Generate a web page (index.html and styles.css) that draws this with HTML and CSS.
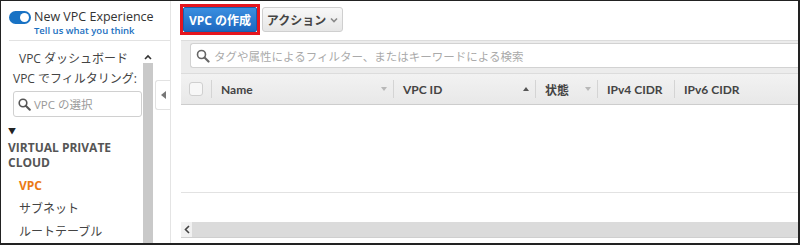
FILE: index.html
```html
<!DOCTYPE html>
<html lang="ja">

<head>
    <meta charset="UTF-8">
    <title>VPC</title>
    <link rel="stylesheet" href="styles.css">
</head>

<body>
    <div class="frame">
        <!-- ナビゲーション -->
        <aside class="nav">
            <div class="nav-head">
                <span class="toggle"><span class="knob"></span></span>
                <div class="head-text">
                    <div class="head-title">New VPC Experience</div>
                    <div class="head-link">Tell us what you think</div>
                </div>
            </div>
            <div class="nav-body">
                <div class="nav-list">
                    <div class="nav-item dash">VPC ダッシュボード</div>
                    <div class="filter-label">VPC でフィルタリング:</div>
                    <div class="nav-search">
                        <svg width="13" height="13" viewBox="0 0 13 13">
                            <circle cx="5" cy="5" r="3.8" fill="none" stroke="#555" stroke-width="1.6"/>
                            <path d="M7.8 7.8 L11.8 11.8" stroke="#555" stroke-width="2" stroke-linecap="round"/>
                        </svg>
                        <span>VPC の選択</span>
                    </div>
                    <div class="caret">&#9660;</div>
                    <div class="section">VIRTUAL PRIVATE CLOUD</div>
                    <div class="nav-item active">VPC</div>
                    <div class="nav-item">サブネット</div>
                    <div class="nav-item">ルートテーブル</div>
                </div>
                <div class="nav-scroll">
                    <div class="scroll-up">
                        <svg width="8" height="6" viewBox="0 0 8 6"><path d="M1 5 L4 2 L7 5" fill="none" stroke="#333" stroke-width="1.6"/></svg>
                    </div>
                    <div class="scroll-track"></div>
                </div>
                <div class="collapse-col">
                    <div class="collapse-tab"><span class="tri-left"></span></div>
                </div>
            </div>
        </aside>

        <!-- メイン -->
        <main class="main">
            <div class="toolbar">
                <div class="highlight"><button class="btn-primary">VPC の作成</button></div>
                <button class="btn-action">アクション <span class="chev">
                    <svg width="8" height="6" viewBox="0 0 8 6"><path d="M1 1.5 L4 4.5 L7 1.5" fill="none" stroke="#888" stroke-width="1.6"/></svg>
                </span></button>
            </div>

            <div class="panel">
                <div class="panel-top">
                    <div class="search">
                        <svg width="14" height="14" viewBox="0 0 14 14">
                            <circle cx="5.5" cy="5.5" r="4" fill="none" stroke="#666" stroke-width="1.6"/>
                            <path d="M8.5 8.5 L12.5 12.5" stroke="#666" stroke-width="2.2" stroke-linecap="round"/>
                        </svg>
                        <span>タグや属性によるフィルター、またはキーワードによる検索</span>
                    </div>
                    <div class="thead">
                        <div class="th th-check"><span class="checkbox"></span></div>
                        <div class="th col-name"><span class="sep"></span><span class="label">Name</span><span class="sort"></span></div>
                        <div class="th col-id"><span class="sep"></span><span class="label">VPC ID</span><span class="sort up"></span></div>
                        <div class="th col-state"><span class="sep"></span><span class="label">状態</span><span class="sort"></span></div>
                        <div class="th col-v4"><span class="sep"></span><span class="label">IPv4 CIDR</span></div>
                        <div class="th col-v6"><span class="sep"></span><span class="label">IPv6 CIDR</span></div>
                    </div>
                </div>
                <div class="tbody"></div>
                <div class="hscroll">
                    <div class="hscroll-btn">
                        <svg width="6" height="9" viewBox="0 0 6 9"><path d="M5 1 L1.5 4.5 L5 8" fill="none" stroke="#444" stroke-width="1.6"/></svg>
                    </div>
                    <div class="hscroll-track"></div>
                </div>
            </div>
        </main>
    </div>
</body>

</html>
```

FILE: styles.css
```css
/* 全体 */
* {
    box-sizing: border-box;
}

body {
    margin: 0;
    padding: 0;
    background-color: #fff;
    font-family: "Open Sans", "Noto Sans CJK JP", sans-serif;
}

.frame {
    width: 800px;
    height: 245px;
    border-top: 1px solid #222;
    border-left: 1px solid #222;
    border-right: 2px solid #222;
    border-bottom: 2px solid #222;
    display: flex;
    overflow: hidden;
    background-color: #fff;
}

/* ナビゲーション */
.nav {
    width: 170px;
    flex-shrink: 0;
    border-right: 1px solid #e4e4e4;
    display: flex;
    flex-direction: column;
}

.nav-head {
    height: 40px;
    margin-left: 8px;
    border-bottom: 1px solid #e2e2e2;
    display: flex;
    align-items: flex-start;
    padding-top: 9px;
}

.toggle {
    width: 22px;
    height: 13px;
    border-radius: 7px;
    background-color: #1872c4;
    position: relative;
    margin-top: 1px;
    margin-right: 3px;
}

.knob {
    position: absolute;
    right: 2px;
    top: 2px;
    width: 9px;
    height: 9px;
    border-radius: 50%;
    background-color: #fff;
}

.head-title {
    font-size: 12.5px;
    line-height: 14px;
    color: #333;
}

.head-link {
    font-size: 9.5px;
    line-height: 13px;
    color: #1a6fc0;
    font-weight: 600;
}

.nav-body {
    flex: 1;
    display: flex;
}

.nav-list {
    width: 142px;
    padding: 6px 0 0 12px;
    color: #444;
    font-size: 12px;
}

.nav-item {
    height: 23px;
    line-height: 23px;
    padding-left: 6px;
}

.nav-item.dash {
    height: 21px;
}

.filter-label {
    height: 22px;
    line-height: 22px;
}

.nav-search {
    width: 129px;
    height: 26px;
    border: 1px solid #d0d0d0;
    border-radius: 3px;
    margin-top: 1px;
    display: flex;
    align-items: center;
    padding-left: 4px;
    color: #999;
    font-size: 11.5px;
}

.nav-search svg {
    margin-right: 3px;
}

.caret {
    font-size: 8px;
    color: #222;
    margin: 8px 0 0 -5px;
    height: 12px;
}

.section {
    margin-left: -5px;
    font-weight: 700;
    font-size: 12px;
    line-height: 15px;
    color: #555;
    width: 125px;
    padding-top: 3px;
    margin-bottom: 4px;
}

.nav-item.active {
    color: #eb7a14;
    font-weight: 700;
}

/* ナビのスクロールバー */
.nav-scroll {
    width: 10px;
    margin-top: 9px;
    display: flex;
    flex-direction: column;
}

.scroll-up {
    height: 13px;
    display: flex;
    justify-content: center;
    align-items: center;
}

.scroll-track {
    flex: 1;
    background-color: #c9c9c9;
}

.collapse-col {
    width: 17px;
    padding-left: 2px;
}

.collapse-tab {
    margin-top: 39px;
    height: 30px;
    border: 1px solid #e2e2e2;
    border-right: none;
    border-radius: 3px 0 0 3px;
    background-color: #fff;
    display: flex;
    justify-content: center;
    align-items: center;
}

.tri-left {
    width: 0;
    height: 0;
    border-top: 4px solid transparent;
    border-bottom: 4px solid transparent;
    border-right: 5px solid #777;
}

/* メイン */
.main {
    flex: 1;
    display: flex;
    flex-direction: column;
    padding-left: 9px;
    min-width: 0;
}

.toolbar {
    height: 39px;
    display: flex;
    align-items: flex-start;
    padding-top: 3px;
}

.highlight {
    border: 3px solid #e5161f;
    padding: 0;
    display: flex;
}

button {
    font-family: "Open Sans", "Noto Sans CJK JP", sans-serif;
    cursor: pointer;
}

.btn-primary {
    height: 25px;
    width: 74px;
    border: 1px solid #1a5fae;
    border-radius: 2px;
    background: linear-gradient(#3a8fe0, #1e68c0);
    color: #fff;
    font-weight: 700;
    font-size: 12px;
    padding: 0;
}

.btn-action {
    margin-top: 3px;
    height: 25px;
    width: 81px;
    margin-left: 2px;
    border: 1px solid #cfcfcf;
    border-radius: 3px;
    background: linear-gradient(#f8f8f8, #e6e6e6);
    color: #444;
    font-weight: 700;
    font-size: 12px;
    padding: 0;
    display: flex;
    align-items: center;
    justify-content: center;
    gap: 4px;
}

.chev {
    display: flex;
}

/* テーブル */
.panel {
    margin-left: 1px;
    flex: 1;
    display: flex;
    flex-direction: column;
}

.panel-top {
    background-color: #ececec;
    border-top: 1px solid #dcdcdc;
    padding-top: 2px;
}

.search {
    margin-left: 9px;
    height: 25px;
    background-color: #fff;
    border: 1px solid #d2d2d2;
    border-right: none;
    border-radius: 3px 0 0 3px;
    display: flex;
    align-items: center;
    padding-left: 5px;
    color: #aaa;
    font-size: 11.5px;
}

.search svg {
    margin-right: 4px;
}

.thead {
    margin-top: 5px;
    height: 32px;
    border-top: 1px solid #dcdcdc;
    border-bottom: 1px solid #cdcdcd;
    background: linear-gradient(#f2f2f2, #e8e8e8);
    display: flex;
    align-items: center;
    font-family: Lato, "Noto Sans CJK JP", sans-serif;
    font-weight: 700;
    font-size: 12px;
    color: #444;
}

.th {
    height: 100%;
    display: flex;
    align-items: center;
    flex-shrink: 0;
}

.th-check {
    width: 30px;
    padding-left: 8px;
}

.checkbox {
    width: 14px;
    height: 14px;
    border: 1px solid #cfcfcf;
    border-radius: 3px;
    background-color: #f7f7f7;
}

.sep {
    width: 1px;
    height: 18px;
    background-color: #d4d4d4;
    margin-right: 9px;
}

.label {
    flex: 1;
}

.sort {
    width: 0;
    height: 0;
    border-left: 3px solid transparent;
    border-right: 3px solid transparent;
    border-top: 4px solid #b8b8b8;
    margin-right: 6px;
}

.sort.up {
    border-top: none;
    border-bottom: 4px solid #555;
}

.col-name {
    width: 182px;
}

.col-id {
    width: 142px;
}

.col-state {
    width: 62px;
}

.col-v4 {
    width: 77px;
}

.col-v6 {
    width: 120px;
}

.tbody {
    height: 88px;
    border-bottom: 1px solid #e2e2e2;
}

.hscroll {
    margin-top: 29px;
    height: 16px;
    display: flex;
    border-bottom: 1px solid #cfcfcf;
}

.hscroll-btn {
    width: 11px;
    background-color: #f1f1f1;
    display: flex;
    align-items: center;
    justify-content: center;
}

.hscroll-track {
    flex: 1;
    background-color: #dbdbdb;
}
```
